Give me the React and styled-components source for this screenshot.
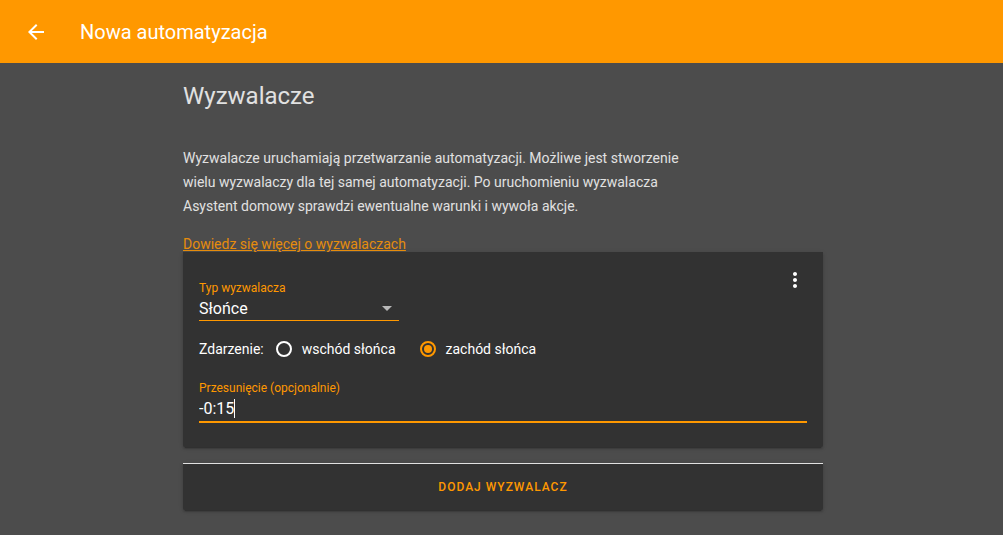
import React, { useState } from "react";
import styled, { createGlobalStyle } from "styled-components";

const accent = "#ff9800";
const card = "#323232";

const GlobalStyle = createGlobalStyle`
  *, *::before, *::after { box-sizing: border-box; }
  body {
    margin: 0;
    background: #4c4c4c;
    color: #e1e1e1;
    font-family: Roboto, "Noto Sans", sans-serif;
    font-size: 14px;
  }
  button, input, select { font-family: inherit; color: inherit; }
`;

const Toolbar = styled.header`
  display: flex;
  align-items: center;
  gap: 24px;
  height: 63px;
  padding: 0 16px;
  background: ${accent};
  color: #fff;
`;

const Title = styled.h1`
  margin: 0;
  font-size: 20px;
  font-weight: 400;
  line-height: 24px;
`;

const IconButton = styled.button`
  display: flex;
  align-items: center;
  justify-content: center;
  width: 40px;
  height: 40px;
  padding: 0;
  border: 0;
  background: none;
  color: #fff;
  cursor: pointer;
`;

const Main = styled.main`
  padding: 17px 0 24px 3px;
`;

const Section = styled.section`
  width: 100%;
  max-width: 640px;
  margin: 0 auto;
`;

const Heading = styled.h2`
  margin: 0 0 34px;
  font-size: 24px;
  font-weight: 400;
  line-height: 32px;
`;

const Intro = styled.p`
  max-width: 500px;
  margin: 0 0 18px;
  line-height: 24px;
`;

const Link = styled.a`
  display: block;
  width: fit-content;
  line-height: 16px;
  color: #e68c0c;
`;

const Card = styled.div`
  background: ${card};
  border-radius: 0 0 2px 2px;
  box-shadow: 0 2px 2px 0 rgba(0, 0, 0, 0.14), 0 1px 5px 0 rgba(0, 0, 0, 0.12),
    0 3px 1px -2px rgba(0, 0, 0, 0.2);
`;

const TriggerCard = styled(Card)`
  padding: 8px 16px 24px;
  margin-bottom: 16px;
`;

const TopRow = styled.div`
  display: flex;
  justify-content: space-between;
  align-items: flex-start;
  margin-right: -8px;
`;

const Field = styled.div`
  display: flex;
  flex-direction: column;
`;

const TypeField = styled(Field)`
  width: 200px;
  margin-top: 20px;
`;

const FieldLabel = styled.label`
  font-size: 12px;
  line-height: 16px;
  color: ${accent};
`;

const FieldLine = styled.div`
  display: flex;
  align-items: center;
  height: 27px;
  border-bottom: 2px solid ${accent};
`;

const SelectLine = styled.div`
  display: grid;
  align-items: center;
  height: 25px;
  border-bottom: 1px solid ${accent};
  > * { grid-area: 1 / 1; }
  svg { justify-self: end; pointer-events: none; }
`;

const Select = styled.select`
  appearance: none;
  width: 100%;
  height: 24px;
  padding: 0;
  border: 0;
  outline: 0;
  background: none;
  color: #fff;
  font-size: 16px;
`;

const TextInput = styled.input`
  field-sizing: content;
  max-width: 100%;
  height: 24px;
  padding: 0;
  border: 0;
  outline: 0;
  background: none;
  color: #fff;
  font-size: 16px;
  caret-color: transparent;
`;

const Caret = styled.span`
  width: 1px;
  height: 19px;
  background: #fff;
`;

const EventRow = styled.fieldset`
  display: flex;
  align-items: center;
  margin: 16px 0 19px;
  padding: 0;
  border: 0;
  line-height: 24px;
  color: #fff;
`;

const RadioLabel = styled.label`
  display: flex;
  align-items: center;
  gap: 10px;
  margin-left: ${(p) => p.$gap}px;
`;

const Radio = styled.input`
  appearance: none;
  display: grid;
  place-items: center;
  width: 16px;
  height: 16px;
  margin: 0;
  border: 2px solid #fff;
  border-radius: 50%;
  &:checked { border-color: ${accent}; }
  &:checked::before {
    content: "";
    width: 8px;
    height: 8px;
    border-radius: 50%;
    background: ${accent};
  }
`;

const AddCard = styled(Card)`
  border-top: 1px solid #e1e1e1;
`;

const AddButton = styled.button`
  display: block;
  width: 100%;
  height: 46px;
  padding: 0;
  border: 0;
  background: none;
  color: ${accent};
  font-size: 12px;
  font-weight: 500;
  letter-spacing: 1px;
  text-transform: uppercase;
  cursor: pointer;
`;

export default function App() {
  const [event, setEvent] = useState("sunset");
  const [offset, setOffset] = useState("-0:15");
  return (
    <>
      <GlobalStyle />
      <Toolbar>
        <IconButton aria-label="Wstecz">
          <svg width="24" height="24" viewBox="0 0 24 24" fill="currentColor">
            <path d="M20 11H7.83l5.59-5.59L12 4l-8 8 8 8 1.41-1.41L7.83 13H20v-2z" />
          </svg>
        </IconButton>
        <Title>Nowa automatyzacja</Title>
      </Toolbar>
      <Main>
        <Section>
          <Heading>Wyzwalacze</Heading>
          <Intro>
            Wyzwalacze uruchamiają przetwarzanie automatyzacji. Możliwe jest stworzenie wielu
            wyzwalaczy dla tej samej automatyzacji. Po uruchomieniu wyzwalacza Asystent domowy
            sprawdzi ewentualne warunki i wywoła akcje.
          </Intro>
          <Link href="#triggers">Dowiedz się więcej o wyzwalaczach</Link>
          <TriggerCard>
            <TopRow>
              <TypeField>
                <FieldLabel htmlFor="type">Typ wyzwalacza</FieldLabel>
                <SelectLine>
                  <Select id="type" defaultValue="sun">
                    <option value="sun">Słońce</option>
                  </Select>
                  <svg width="24" height="24" viewBox="0 0 24 24" fill="#b8b8b8">
                    <path d="M7 10l5 5 5-5z" />
                  </svg>
                </SelectLine>
              </TypeField>
              <IconButton aria-label="Więcej">
                <svg width="24" height="24" viewBox="0 0 24 24" fill="currentColor">
                  <path d="M12 8c1.1 0 2-.9 2-2s-.9-2-2-2-2 .9-2 2 .9 2 2 2zm0 2c-1.1 0-2 .9-2 2s.9 2 2 2 2-.9 2-2-.9-2-2-2zm0 6c-1.1 0-2 .9-2 2s.9 2 2 2 2-.9 2-2-.9-2-2-2z" />
                </svg>
              </IconButton>
            </TopRow>
            <EventRow aria-labelledby="event-label">
              <span id="event-label">Zdarzenie:</span>
              <RadioLabel $gap={12}>
                <Radio
                  type="radio"
                  name="event"
                  checked={event === "sunrise"}
                  onChange={() => setEvent("sunrise")}
                />
                wschód słońca
              </RadioLabel>
              <RadioLabel $gap={24}>
                <Radio
                  type="radio"
                  name="event"
                  checked={event === "sunset"}
                  onChange={() => setEvent("sunset")}
                />
                zachód słońca
              </RadioLabel>
            </EventRow>
            <Field>
              <FieldLabel htmlFor="offset">Przesunięcie (opcjonalnie)</FieldLabel>
              <FieldLine>
                <TextInput
                  id="offset"
                  value={offset}
                  onChange={(e) => setOffset(e.target.value)}
                />
                <Caret />
              </FieldLine>
            </Field>
          </TriggerCard>
          <AddCard>
            <AddButton>Dodaj wyzwalacz</AddButton>
          </AddCard>
        </Section>
      </Main>
    </>
  );
}
